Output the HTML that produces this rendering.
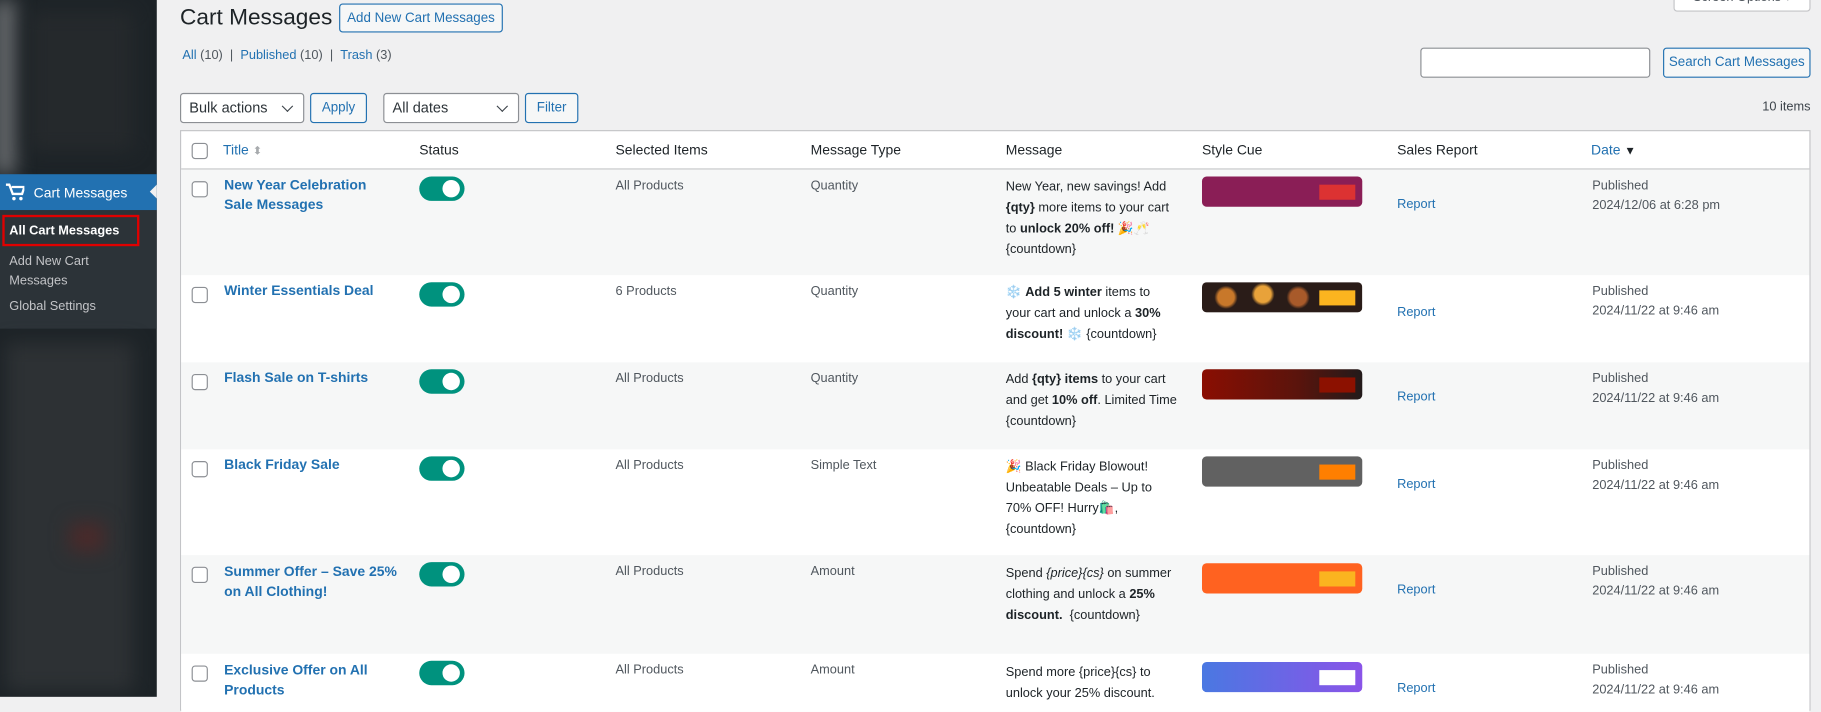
<!DOCTYPE html>
<html><head><meta charset="utf-8"><style>
*{box-sizing:border-box;margin:0;padding:0}
html,body{width:1821px;height:696px;overflow:hidden;background:#f0f0f1}
#w{position:absolute;left:0;top:0;width:1568px;height:600px;transform:scale(1.16135);transform-origin:0 0;font-family:"Liberation Sans","Noto Sans CJK JP",sans-serif;font-size:12px;color:#3c434a}
.a{position:absolute}
#sb{left:0;top:0;width:135px;height:600px;background:#1d2327;overflow:hidden}
.blur{position:absolute;background:#3a3d40;filter:blur(8px)}
a{color:#2271b1;text-decoration:none}
.btn{position:absolute;border:1px solid #2271b1;border-radius:3px;color:#2271b1;background:#f6f7f7;font-size:11.5px;text-align:center;line-height:24px}
.sel{position:absolute;border:1px solid #8c8f94;border-radius:3px;background:#fff;color:#2c3338;font-size:12.5px;line-height:24px;padding-left:7px}
.sel:after{content:"";position:absolute;right:10px;top:7px;width:6px;height:6px;border-right:1.5px solid #3c434a;border-bottom:1.5px solid #3c434a;transform:rotate(45deg)}
#tbl{left:155px;top:112px;width:1404px;height:500px;background:#fff;border:1px solid #c3c4c7}
.hd{position:absolute;top:9px;font-size:12px;color:#1d2327}
.row{position:absolute;left:0;width:1402px}
.cb{position:absolute;left:9px;width:14px;height:14px;border:1px solid #8c8f94;border-radius:3px;background:#fff}
.t{position:absolute;font-weight:bold;color:#2271b1;font-size:12px;line-height:17px}
.tg{position:absolute;left:205px;width:39px;height:21px;border-radius:11px;background:#00927e}
.tg:after{content:"";position:absolute;right:4px;top:3px;width:15px;height:15px;border-radius:50%;background:#fff}
.c{position:absolute;font-size:11px;color:#50575e}
.m{position:absolute;left:710px;width:148px;font-size:11px;line-height:18px;color:#1d2327}
.sc{position:absolute;left:879px;width:138px;height:26px;border-radius:4px;overflow:hidden}
.sc i{position:absolute;left:101px;top:7px;width:31px;height:13px}
.rp{position:absolute;left:1047px;font-size:11px;color:#2271b1}
.dt{position:absolute;left:1215px;font-size:11px;line-height:17px;color:#50575e}
</style></head><body><div id="w">
<div id="sb" class="a">
<div class="blur" style="left:-5px;top:0;width:18px;height:150px;background:#6a6d70"></div>
<div class="blur" style="left:25px;top:10px;width:90px;height:120px;background:#25292c"></div>
<div class="a" style="left:0;top:150px;width:135px;height:31px;background:#2271b1"></div>
<div class="a" style="left:122px;top:158px;width:0;height:0;border:7px solid transparent;border-right:7px solid #f0f0f1"></div>
<svg class="a" style="left:5px;top:158px" width="16" height="15" viewBox="0 0 16 15"><path d="M0 1h3l3 8h8l2-6H5" fill="none" stroke="#fff" stroke-width="2"/><circle cx="7" cy="13" r="1.5" fill="#fff"/><circle cx="13" cy="13" r="1.5" fill="#fff"/></svg>
<div class="a" style="left:29px;top:159px;color:#fff;font-size:12px">Cart Messages</div>
<div class="a" style="left:0;top:181px;width:135px;height:102px;background:#2c3338"></div>
<div class="a" style="left:2px;top:185px;width:118px;height:27px;border:2px solid #e00000"></div>
<div class="a" style="left:8px;top:193px;color:#fff;font-weight:bold;font-size:11px">All Cart Messages</div>
<div class="a" style="left:8px;top:217px;color:#c3c4c7;font-size:11px;line-height:17px">Add New Cart<br>Messages</div>
<div class="a" style="left:8px;top:258px;color:#c3c4c7;font-size:11px">Global Settings</div>
<div class="blur" style="left:5px;top:295px;width:110px;height:300px;background:#2d3134"></div>
<div class="blur" style="left:60px;top:450px;width:30px;height:25px;background:#4a2a2a"></div>
</div>
<div class="a" style="left:1441px;top:-10px;width:118px;height:20px;border:1px solid #c3c4c7;border-radius:3px;background:#fff;font-size:11px;color:#50575e;text-align:center;line-height:14px">Screen Options ▾</div>
<div class="a" style="left:155px;top:4px;font-size:19.5px;color:#1d2327">Cart Messages</div>
<div class="btn" style="left:292px;top:3px;width:141px;height:25px">Add New Cart Messages</div>
<div class="a" style="left:157px;top:42px;font-size:11px;color:#50575e"><a>All</a> (10) &nbsp;| &nbsp;<a>Published</a> (10) &nbsp;| &nbsp;<a>Trash</a> (3)</div>
<div class="a" style="left:1223px;top:41px;width:198px;height:26px;border:1px solid #8c8f94;border-radius:3px;background:#fff"></div>
<div class="btn" style="left:1432px;top:41px;width:127px;height:26px">Search Cart Messages</div>
<div class="sel" style="left:155px;top:80px;width:107px;height:26px">Bulk actions</div>
<div class="btn" style="left:267px;top:80px;width:49px;height:26px">Apply</div>
<div class="sel" style="left:330px;top:80px;width:117px;height:26px">All dates</div>
<div class="btn" style="left:452px;top:80px;width:46px;height:26px">Filter</div>
<div class="a" style="left:1500px;top:86px;width:59px;text-align:right;font-size:11px">10 items</div>
<div id="tbl" class="a">
<div class="a" style="left:0;top:32px;width:1402px;height:1px;background:#c3c4c7"></div>
<div class="cb" style="top:10px"></div>
<div class="hd" style="left:36px;color:#2271b1">Title <span style="color:#a7aaad;font-size:10px">⬍</span></div>
<div class="hd" style="left:205px">Status</div>
<div class="hd" style="left:374px">Selected Items</div>
<div class="hd" style="left:542px">Message Type</div>
<div class="hd" style="left:710px">Message</div>
<div class="hd" style="left:879px">Style Cue</div>
<div class="hd" style="left:1047px">Sales Report</div>
<div class="hd" style="left:1214px;color:#2271b1">Date <span style="color:#1d2327;font-size:10px">▼</span></div>

<div class="row" style="top:33px;height:91px;background:#f6f7f7">
<div class="cb" style="top:10px"></div><div class="t" style="left:37px;top:5px">New Year Celebration<br>Sale Messages</div>
<div class="tg" style="top:6px"></div><div class="c" style="left:374px;top:8px">All Products</div><div class="c" style="left:542px;top:8px">Quantity</div>
<div class="m" style="top:6px">New Year, new savings! Add <b>{qty}</b> more items to your cart to <b>unlock 20% off!</b> 🎉🥂 {countdown}</div>
<div class="sc" style="top:6px;background:#8a1e56"><i style="background:#dc3232"></i></div>
<div class="rp" style="top:24px">Report</div><div class="dt" style="top:6px">Published<br>2024/12/06 at 6:28 pm</div></div>

<div class="row" style="top:124px;height:75px;background:#fff">
<div class="cb" style="top:10px"></div><div class="t" style="left:37px;top:5px">Winter Essentials Deal</div>
<div class="tg" style="top:6px"></div><div class="c" style="left:374px;top:8px">6 Products</div><div class="c" style="left:542px;top:8px">Quantity</div>
<div class="m" style="top:6px">❄️ <b>Add 5 winter</b> items to your cart and unlock a <b>30% discount!</b> ❄️ {countdown}</div>
<div class="sc" style="top:6px;background:radial-gradient(circle at 15% 50%,#c8782a 0 7px,transparent 10px),radial-gradient(circle at 38% 40%,#e8a23a 0 7px,transparent 10px),radial-gradient(circle at 60% 50%,#a85a2a 0 7px,transparent 10px),#2a1c18"><i style="background:#fbb41f"></i></div>
<div class="rp" style="top:26px">Report</div><div class="dt" style="top:6px">Published<br>2024/11/22 at 9:46 am</div></div>

<div class="row" style="top:199px;height:75px;background:#f6f7f7">
<div class="cb" style="top:10px"></div><div class="t" style="left:37px;top:5px">Flash Sale on T-shirts</div>
<div class="tg" style="top:6px"></div><div class="c" style="left:374px;top:8px">All Products</div><div class="c" style="left:542px;top:8px">Quantity</div>
<div class="m" style="top:6px">Add <b>{qty} items</b> to your cart and get <b>10% off</b>. Limited Time {countdown}</div>
<div class="sc" style="top:6px;background:linear-gradient(90deg,#8a0e02,#5a140c 60%,#221a1a)"><i style="background:#8c1100"></i></div>
<div class="rp" style="top:24px">Report</div><div class="dt" style="top:6px">Published<br>2024/11/22 at 9:46 am</div></div>

<div class="row" style="top:274px;height:91px;background:#fff">
<div class="cb" style="top:10px"></div><div class="t" style="left:37px;top:5px">Black Friday Sale</div>
<div class="tg" style="top:6px"></div><div class="c" style="left:374px;top:8px">All Products</div><div class="c" style="left:542px;top:8px">Simple Text</div>
<div class="m" style="top:6px">🎉 Black Friday Blowout! Unbeatable Deals – Up to 70% OFF! Hurry🛍️,<br>{countdown}</div>
<div class="sc" style="top:6px;background:#616161"><i style="background:#ff7f00"></i></div>
<div class="rp" style="top:24px">Report</div><div class="dt" style="top:6px">Published<br>2024/11/22 at 9:46 am</div></div>

<div class="row" style="top:365px;height:85px;background:#f6f7f7">
<div class="cb" style="top:10px"></div><div class="t" style="left:37px;top:6px">Summer Offer – Save 25%<br>on All Clothing!</div>
<div class="tg" style="top:6px"></div><div class="c" style="left:374px;top:8px">All Products</div><div class="c" style="left:542px;top:8px">Amount</div>
<div class="m" style="top:7px">Spend <i>{price}{cs}</i> on summer clothing and unlock a <b>25% discount.</b>&nbsp; {countdown}</div>
<div class="sc" style="top:7px;background:#ff6220"><i style="background:#fbb41f"></i></div>
<div class="rp" style="top:24px">Report</div><div class="dt" style="top:6px">Published<br>2024/11/22 at 9:46 am</div></div>

<div class="row" style="top:450px;height:50px;background:#fff">
<div class="cb" style="top:10px"></div><div class="t" style="left:37px;top:6px">Exclusive Offer on All<br>Products</div>
<div class="tg" style="top:6px"></div><div class="c" style="left:374px;top:8px">All Products</div><div class="c" style="left:542px;top:8px">Amount</div>
<div class="m" style="top:7px">Spend more {price}{cs} to unlock your 25% discount.</div>
<div class="sc" style="top:7px;background:linear-gradient(90deg,#4a78e2,#8a54e8)"><i style="background:#fff"></i></div>
<div class="rp" style="top:24px">Report</div><div class="dt" style="top:6px">Published<br>2024/11/22 at 9:46 am</div></div>
</div>
</div></body></html>
